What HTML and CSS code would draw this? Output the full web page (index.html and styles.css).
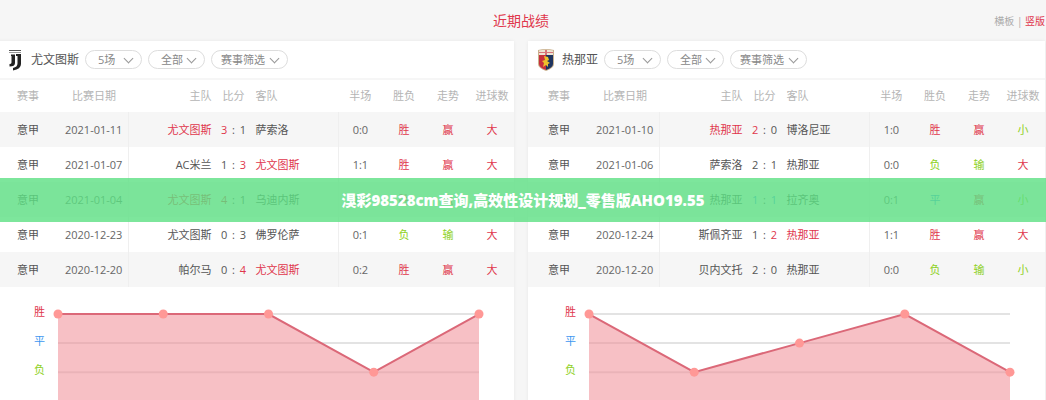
FILE: index.html
```
<!DOCTYPE html>
<html lang="zh-CN">
<head>
    <meta charset="UTF-8">
    <meta name="viewport" content="width=device-width, initial-scale=1.0">
    <title>近期战绩</title>
    <link rel="stylesheet" href="styles.css">
</head>
<body>
    <header class="top">
        <h1>近期战绩</h1>
        <nav class="layout-switch">
            <a href="#">横板</a> | <a href="#" class="active">竖版</a>
        </nav>
    </header>

    <main class="panels">
        <section class="panel">
            <div class="panel-head">
                <svg class="crest" viewBox="0 0 20 24">
                    <path d="M4 2h12v1H4z" fill="#555"/>
                    <path d="M4 4h12v1H4z" fill="#999"/>
                    <path d="M6 6.500h4V15q0 3.500-5.500 3.500V16q2 0 2-1.500V8H6z" fill="#222"/>
                    <path d="M11 6h5v10q0 5-8 6.500V20q4.500-1 4.500-4.500V8H11z" fill="#222"/>
                </svg>
                <h2>尤文图斯</h2>
                <div class="pick"><select aria-label="场数"><option>5场</option><option>10场</option></select></div>
                <div class="pick"><select aria-label="主客"><option>全部</option><option>主场</option></select></div>
                <div class="pick wide"><select aria-label="赛事"><option>赛事筛选</option></select></div>
            </div>
            <table>
                <thead>
                    <tr>
                        <th class="event">赛事</th>
                        <th class="date">比赛日期</th>
                        <th class="home">主队</th>
                        <th class="score">比分</th>
                        <th class="away">客队</th>
                        <th>半场</th>
                        <th>胜负</th>
                        <th>走势</th>
                        <th class="goals">进球数</th>
                    </tr>
                </thead>
                <tbody>
                    <tr>
                        <td>意甲</td><td class="date">2021-01-11</td>
                        <td class="home red">尤文图斯</td><td class="score"><b class="red">3</b> : <b>1</b></td><td class="away">萨索洛</td>
                        <td class="half">0:0</td><td class="red">胜</td><td class="red">赢</td><td class="red">大</td>
                    </tr>
                    <tr>
                        <td>意甲</td><td class="date">2021-01-07</td>
                        <td class="home">AC米兰</td><td class="score"><b>1</b> : <b class="red">3</b></td><td class="away red">尤文图斯</td>
                        <td class="half">1:1</td><td class="red">胜</td><td class="red">赢</td><td class="red">大</td>
                    </tr>
                    <tr>
                        <td>意甲</td><td class="date">2021-01-04</td>
                        <td class="home red">尤文图斯</td><td class="score"><b class="red">4</b> : <b>1</b></td><td class="away">乌迪内斯</td>
                        <td class="half">1:0</td><td class="red">胜</td><td class="red">赢</td><td class="red">大</td>
                    </tr>
                    <tr>
                        <td>意甲</td><td class="date">2020-12-23</td>
                        <td class="home">尤文图斯</td><td class="score"><b>0</b> : <b>3</b></td><td class="away">佛罗伦萨</td>
                        <td class="half">0:1</td><td class="green">负</td><td class="green">输</td><td class="red">大</td>
                    </tr>
                    <tr>
                        <td>意甲</td><td class="date">2020-12-20</td>
                        <td class="home">帕尔马</td><td class="score"><b>0</b> : <b class="red">4</b></td><td class="away red">尤文图斯</td>
                        <td class="half">0:2</td><td class="red">胜</td><td class="red">赢</td><td class="red">大</td>
                    </tr>
                </tbody>
            </table>
            <div class="chart">
                <div class="levels">
                    <span class="red">胜</span>
                    <span class="blue">平</span>
                    <span class="green">负</span>
                </div>
                <svg class="plot" viewBox="0 0 420 100">
                    <path class="grid" d="M0 10H420M0 39H420M0 68H420"/>
                    <path class="area" d="M0 10H210L315 68L420 10V100H0Z"/>
                    <path class="line" d="M0 10H210L315 68L420 10"/>
                    <g class="dots">
                        <circle cx="0" cy="10" r="4.500"/>
                        <circle cx="105" cy="10" r="4.500"/>
                        <circle cx="210" cy="10" r="4.500"/>
                        <circle cx="315" cy="68" r="4.500"/>
                        <circle cx="420" cy="10" r="4.500"/>
                    </g>
                </svg>
            </div>
        </section>

        <section class="panel">
            <div class="panel-head">
                <svg class="crest" viewBox="0 0 20 24">
                    <path d="M2 2q8-2 16 0v14q0 4-8 7-8-3-8-7z" fill="#c9b18d"/>
                    <path d="M3 7h7v15q-7-2.500-7-6z" fill="#c8303c"/>
                    <path d="M10 7h7v9q0 3.500-7 6z" fill="#1f3560"/>
                    <path d="M3 2.500q7-1.500 14 0V7H3z" fill="#eee3d3"/>
                    <path d="M9 2h2v5H9zM3 4h14v1H3z" fill="#d9747a"/>
                    <path d="M8 8l4 1 1 3-2 1 3 2-2 1v3l-2-2-3 2 1-4-2-2 3-1z" fill="#efc02c"/>
                </svg>
                <h2>热那亚</h2>
                <div class="pick"><select aria-label="场数"><option>5场</option><option>10场</option></select></div>
                <div class="pick"><select aria-label="主客"><option>全部</option><option>主场</option></select></div>
                <div class="pick wide"><select aria-label="赛事"><option>赛事筛选</option></select></div>
            </div>
            <table>
                <thead>
                    <tr>
                        <th class="event">赛事</th>
                        <th class="date">比赛日期</th>
                        <th class="home">主队</th>
                        <th class="score">比分</th>
                        <th class="away">客队</th>
                        <th>半场</th>
                        <th>胜负</th>
                        <th>走势</th>
                        <th class="goals">进球数</th>
                    </tr>
                </thead>
                <tbody>
                    <tr>
                        <td>意甲</td><td class="date">2021-01-10</td>
                        <td class="home red">热那亚</td><td class="score"><b class="red">2</b> : <b>0</b></td><td class="away">博洛尼亚</td>
                        <td class="half">1:0</td><td class="red">胜</td><td class="red">赢</td><td class="green">小</td>
                    </tr>
                    <tr>
                        <td>意甲</td><td class="date">2021-01-06</td>
                        <td class="home">萨索洛</td><td class="score"><b>2</b> : <b>1</b></td><td class="away">热那亚</td>
                        <td class="half">0:0</td><td class="green">负</td><td class="green">输</td><td class="red">大</td>
                    </tr>
                    <tr>
                        <td>意甲</td><td class="date">2021-01-03</td>
                        <td class="home">热那亚</td><td class="score"><b class="blue">1</b> : <b class="blue">1</b></td><td class="away">拉齐奥</td>
                        <td class="half">0:1</td><td class="blue">平</td><td class="red">赢</td><td class="green">小</td>
                    </tr>
                    <tr>
                        <td>意甲</td><td class="date">2020-12-24</td>
                        <td class="home">斯佩齐亚</td><td class="score"><b>1</b> : <b class="red">2</b></td><td class="away red">热那亚</td>
                        <td class="half">1:1</td><td class="red">胜</td><td class="red">赢</td><td class="red">大</td>
                    </tr>
                    <tr>
                        <td>意甲</td><td class="date">2020-12-20</td>
                        <td class="home">贝内文托</td><td class="score"><b>2</b> : <b>0</b></td><td class="away">热那亚</td>
                        <td class="half">0:0</td><td class="green">负</td><td class="green">输</td><td class="green">小</td>
                    </tr>
                </tbody>
            </table>
            <div class="chart">
                <div class="levels">
                    <span class="red">胜</span>
                    <span class="blue">平</span>
                    <span class="green">负</span>
                </div>
                <svg class="plot" viewBox="0 0 420 100">
                    <path class="grid" d="M0 10H420M0 39H420M0 68H420"/>
                    <path class="area" d="M0 10L105 68L210 39L315 10L420 68V100H0Z"/>
                    <path class="line" d="M0 10L105 68L210 39L315 10L420 68"/>
                    <g class="dots">
                        <circle cx="0" cy="10" r="4.500"/>
                        <circle cx="105" cy="68" r="4.500"/>
                        <circle cx="210" cy="39" r="4.500"/>
                        <circle cx="315" cy="10" r="4.500"/>
                        <circle cx="420" cy="68" r="4.500"/>
                    </g>
                </svg>
            </div>
        </section>
    </main>

    <div class="banner">湨彩98528cm查询,高效性设计规划_零售版AHO19.55</div>
</body>
</html>
```
FILE: styles.css
```
* {
    margin: 0;
    padding: 0;
    box-sizing: border-box;
}

body {
    position: relative;
    min-height: 100vh;
    overflow: hidden;
    font-family: "Open Sans", "Noto Sans CJK SC", sans-serif;
    font-size: 11px;
    line-height: 16px;
    color: #555;
    background-color: #f6f6f6;
}

a {
    color: inherit;
    text-decoration: none;
}

.top {
    display: grid;
    grid-template-columns: 1fr auto 1fr;
    align-items: center;
    height: 41px;
    margin: 0 1px 0 -3px;
}

.top h1 {
    grid-column: 2;
    font-size: 14px;
    font-weight: normal;
    color: #e0364c;
}

.layout-switch {
    justify-self: end;
    font-size: 10px;
    color: #aaa;
}

.layout-switch .active {
    color: #e0364c;
}

/* the left panel runs slightly past the window edge */
.panels {
    display: grid;
    grid-template-columns: 1fr 1fr;
    gap: 14px;
    margin: 0 1px 0 -3px;
}

.panel {
    background-color: #fff;
    box-shadow: 0 0 3px #e8e8e8;
}

.panel-head {
    display: flex;
    align-items: center;
    gap: 6px;
    height: 39px;
    padding-left: 8px;
    border-bottom: 2px solid #f6f6f6;
}

.panel-head h2 {
    font-size: 12px;
    font-weight: normal;
    color: #555;
}

.crest {
    width: 20px;
    height: 24px;
}

.pick {
    position: relative;
    width: 57px;
}

.pick.wide {
    width: 77px;
}

.pick select {
    display: block;
    width: 100%;
    height: 19px;
    padding: 0 0 0 12px;
    appearance: none;
    font: inherit;
    color: #888;
    background-color: #fff;
    border: 1px solid #ddd;
    border-radius: 10px;
}

.pick.wide select {
    padding-left: 9px;
}

.pick::after {
    content: "";
    position: absolute;
    top: 5px;
    right: 10px;
    width: 6px;
    height: 6px;
    border: solid #999;
    border-width: 0 1px 1px 0;
    transform: rotate(45deg);
    pointer-events: none;
}

table {
    width: 100%;
    table-layout: fixed;
    border-collapse: collapse;
}

th {
    height: 32px;
    font-weight: normal;
    color: #b5b5b5;
    white-space: nowrap;
}

td {
    height: 35px;
    text-align: center;
}

tbody tr:nth-child(odd) {
    background-color: #f6f6f6;
}

th.event {
    width: 12%;
}

th.date {
    width: 13.5%;
}

th.home,
th.away {
    width: 16%;
}

.home {
    text-align: right;
}

.away {
    text-align: left;
}

td.date,
td.away {
    border-right: 1px solid #efefef;
}

td.date,
td.half {
    color: #666;
}

.score b {
    display: inline-block;
    width: 10px;
    font-weight: normal;
}

.red {
    color: #e0364c;
}

.green {
    color: #8fd125;
}

.blue {
    color: #3d97f0;
}

.chart {
    display: flex;
    gap: 13px;
    padding: 17px 35px 0 37px;
}

.levels {
    display: flex;
    flex-direction: column;
    gap: 13px;
    width: 11px;
}

.plot {
    flex: 1;
    min-width: 0;
    overflow: visible;
}

.grid {
    stroke: #e3e3e3;
    stroke-width: 2;
}

.area {
    fill: #f08c96;
    fill-opacity: 0.55;
}

.line {
    fill: none;
    stroke: #db6878;
    stroke-width: 2;
}

.dots {
    fill: #ff9896;
}

/* translucent strip over both tables */
.banner {
    position: absolute;
    top: 178px;
    left: 0;
    width: 100%;
    font-family: "Open Sans", "Noto Sans CJK SC", sans-serif;
    font-size: 15px;
    font-weight: 800;
    line-height: 44px;
    text-align: center;
    color: #fff;
    background-color: rgba(93, 224, 131, 0.8);
}
```
